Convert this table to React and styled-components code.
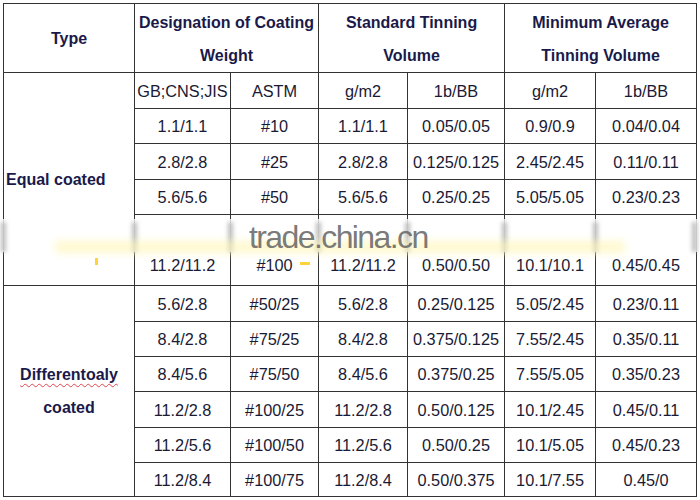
import React from "react";
import styled, { createGlobalStyle } from "styled-components";

const GlobalStyle = createGlobalStyle`
  html, body {
    margin: 0;
    padding: 0;
    background: #ffffff;
  }
`;

const Page = styled.div`
  position: relative;
  width: 700px;
  height: 500px;
  padding: 3px 0 0 3px;
  box-sizing: border-box;
  font-family: "Liberation Sans", Arial, sans-serif;
  overflow: hidden;
`;

const Table = styled.table`
  border-collapse: collapse;
  table-layout: fixed;
  width: 693px;
  border: 1px solid #333333;
`;

const Row = styled.tr`
  height: ${(p) => p.$h}px;
`;

const Cell = styled.td`
  border: 1px solid #333333;
  padding: 0 0 ${(p) => (p.$low ? 11 : 0)}px 0;
  text-align: center;
  vertical-align: ${(p) => (p.$low ? "bottom" : "middle")};
  font-size: 16.3px;
  line-height: 18px;
  color: #1a1a34;
  white-space: nowrap;
`;

const HeadCell = styled(Cell)`
  font-weight: bold;
  font-size: 16px;
  line-height: 33px;
  color: #1a1a4a;
  padding-top: 1px;
`;

const TypeCell = styled(Cell)`
  font-weight: bold;
  font-size: 16px;
  line-height: 33px;
  color: #1a1a4a;
  text-align: ${(p) => (p.$left ? "left" : "center")};
  padding-left: ${(p) => (p.$left ? 2 : 0)}px;
`;

const Misspelt = styled.span`
  text-decoration: underline wavy #e0474c;
  text-decoration-thickness: 1px;
  text-underline-offset: 3px;
`;

const Smear = styled.div`
  position: absolute;
  left: 0;
  top: 219px;
  width: 700px;
  height: 33px;
  background: rgba(255, 255, 255, 0.8);
`;

const Blot = styled.div`
  position: absolute;
  top: 222px;
  width: 5px;
  height: 30px;
  background: #bdbdbd;
  filter: blur(2px);
`;

const YellowBand = styled.div`
  position: absolute;
  left: 55px;
  top: 241px;
  width: 570px;
  height: 12px;
  background: #fff6b8;
  filter: blur(4px);
  opacity: 0.7;
`;

const Dash = styled.div`
  position: absolute;
  width: 10px;
  height: 3px;
  background: #ffd43a;
  filter: blur(0.6px);
`;

const Watermark = styled.div`
  position: absolute;
  left: 249px;
  top: 219px;
  font-family: "Liberation Sans", Arial, sans-serif;
  font-size: 32px;
  letter-spacing: -1.6px;
  color: rgba(105, 105, 105, 0.9);
`;

const widths = [131, 96, 88, 89, 97, 91, 101];
const lines = [3, 134, 230, 318, 407, 504, 595, 694];

const equal = [
  ["1.1/1.1", "#10", "1.1/1.1", "0.05/0.05", "0.9/0.9", "0.04/0.04", 35],
  ["2.8/2.8", "#25", "2.8/2.8", "0.125/0.125", "2.45/2.45", "0.11/0.11", 36],
  ["5.6/5.6", "#50", "5.6/5.6", "0.25/0.25", "5.05/5.05", "0.23/0.23", 35],
  ["11.2/11.2", "#100", "11.2/11.2", "0.50/0.50", "10.1/10.1", "0.45/0.45", 71],
];

const differ = [
  ["5.6/2.8", "#50/25", "5.6/2.8", "0.25/0.125", "5.05/2.45", "0.23/0.11", 36],
  ["8.4/2.8", "#75/25", "8.4/2.8", "0.375/0.125", "7.55/2.45", "0.35/0.11", 35],
  ["8.4/5.6", "#75/50", "8.4/5.6", "0.375/0.25", "7.55/5.05", "0.35/0.23", 35],
  ["11.2/2.8", "#100/25", "11.2/2.8", "0.50/0.125", "10.1/2.45", "0.45/0.11", 36],
  ["11.2/5.6", "#100/50", "11.2/5.6", "0.50/0.25", "10.1/5.05", "0.45/0.23", 35],
  ["11.2/8.4", "#100/75", "11.2/8.4", "0.50/0.375", "10.1/7.55", "0.45/0", 34],
];

const DataCells = ({ row }) =>
  row.slice(0, 6).map((v, i) => (
    <Cell key={i} $low={row[6] > 60}>
      {v}
    </Cell>
  ));

export default function App() {
  return (
    <Page>
      <GlobalStyle />
      <Table>
        <colgroup>
          {widths.map((w, i) => (
            <col key={i} style={{ width: w }} />
          ))}
        </colgroup>
        <tbody>
          <Row $h={69}>
            <HeadCell>Type</HeadCell>
            <HeadCell colSpan={2}>
              Designation of Coating
              <br />
              Weight
            </HeadCell>
            <HeadCell colSpan={2}>
              Standard Tinning
              <br />
              Volume
            </HeadCell>
            <HeadCell colSpan={2}>
              Minimum Average
              <br />
              Tinning Volume
            </HeadCell>
          </Row>
          <Row $h={36}>
            <TypeCell rowSpan={5} $left>
              Equal coated
            </TypeCell>
            <Cell>GB;CNS;JIS</Cell>
            <Cell>ASTM</Cell>
            <Cell>g/m2</Cell>
            <Cell>1b/BB</Cell>
            <Cell>g/m2</Cell>
            <Cell>1b/BB</Cell>
          </Row>
          {equal.map((row, i) => (
            <Row key={i} $h={row[6]}>
              <DataCells row={row} />
            </Row>
          ))}
          {differ.map((row, i) => (
            <Row key={i} $h={row[6]}>
              {i === 0 && (
                <TypeCell rowSpan={6}>
                  <Misspelt>Differentoaly</Misspelt>
                  <br />
                  coated
                </TypeCell>
              )}
              <DataCells row={row} />
            </Row>
          ))}
        </tbody>
      </Table>
      <Smear />
      {lines.map((x) => (
        <Blot key={x} style={{ left: x - 2 }} />
      ))}
      <YellowBand />
      <Dash style={{ left: 300, top: 262 }} />
      <Dash style={{ left: 95, top: 258, width: 3, height: 7 }} />
      <Watermark>trade.china.cn</Watermark>
    </Page>
  );
}
